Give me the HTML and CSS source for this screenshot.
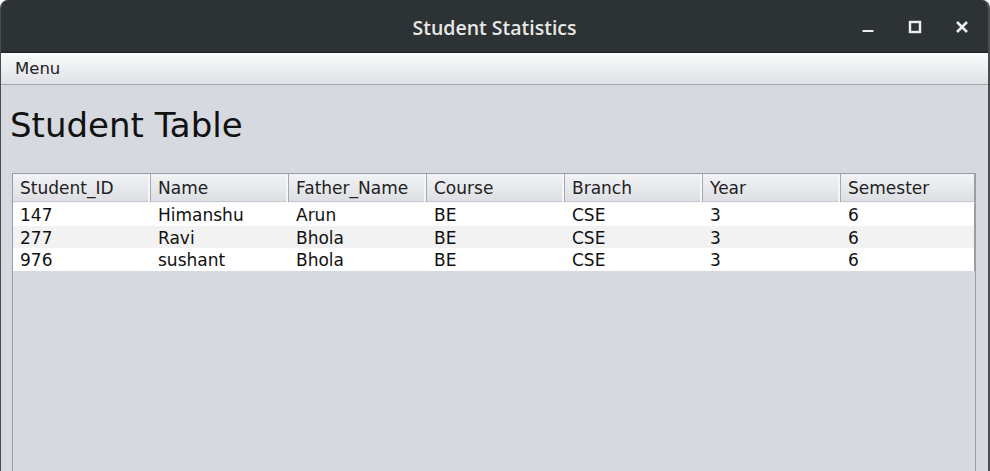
FILE: index.html
```html
<!DOCTYPE html>
<html>
<head>
<meta charset="utf-8">
<link rel="stylesheet" href="styles.css">
</head>
<body>
<div class="window">
  <div class="titlebar">
    <div class="title">Student Statistics</div>
    <div class="controls">
      <svg class="ctl" width="16" height="16" viewBox="0 0 16 16"><rect x="2.5" y="11" width="11" height="2" fill="#eeeeec"/></svg>
      <svg class="ctl" width="16" height="16" viewBox="0 0 16 16"><rect x="3" y="3" width="10" height="10" fill="none" stroke="#eeeeec" stroke-width="2.4"/></svg>
      <svg class="ctl" width="16" height="16" viewBox="0 0 16 16"><path d="M3 3 L13 13 M13 3 L3 13" stroke="#eeeeec" stroke-width="2.6" fill="none"/></svg>
    </div>
  </div>
  <div class="menubar"><span class="menu">Menu</span></div>
  <div class="content">
    <h1 class="heading">Student Table</h1>
    <div class="scrollpane">
      <div class="thead">
        <div class="th">Student_ID</div>
        <div class="th">Name</div>
        <div class="th">Father_Name</div>
        <div class="th">Course</div>
        <div class="th">Branch</div>
        <div class="th">Year</div>
        <div class="th">Semester</div>
      </div>
      <div class="tr">
        <div class="td">147</div><div class="td">Himanshu</div><div class="td">Arun</div><div class="td">BE</div><div class="td">CSE</div><div class="td">3</div><div class="td">6</div>
      </div>
      <div class="tr alt">
        <div class="td">277</div><div class="td">Ravi</div><div class="td">Bhola</div><div class="td">BE</div><div class="td">CSE</div><div class="td">3</div><div class="td">6</div>
      </div>
      <div class="tr">
        <div class="td">976</div><div class="td">sushant</div><div class="td">Bhola</div><div class="td">BE</div><div class="td">CSE</div><div class="td">3</div><div class="td">6</div>
      </div>
    </div>
  </div>
</div>
</body>
</html>
```
FILE: styles.css
```css
html, body {
  margin: 0;
  padding: 0;
  width: 990px;
  height: 471px;
  overflow: hidden;
  background: #ffffff;
}
.window {
  width: 990px;
  height: 471px;
  display: flex;
  flex-direction: column;
  background: #d6d9df;
  border-radius: 8px 8px 0 0;
  overflow: hidden;
  font-family: "DejaVu Sans", sans-serif;
  box-sizing: border-box;
  border-left: 1px solid #4a4d50;
  border-right: 2px solid #4a4d50;
}
.titlebar {
  height: 52px;
  flex: none;
  background: #2d3234;
  border-bottom: 1px solid #1e2122;
  position: relative;
  display: flex;
  align-items: center;
  justify-content: center;
}
.title {
  color: #e7e8e6;
  font-family: "Open Sans", "DejaVu Sans", sans-serif;
  font-weight: 600;
  font-size: 19.5px;
  letter-spacing: 0px;
  margin-top: 2px;
}
.controls {
  position: absolute;
  right: 18px;
  top: 19px;
  display: flex;
  gap: 31px;
}
.ctl { display: block; }
.menubar {
  height: 31px;
  flex: none;
  background: linear-gradient(#fafbfb, #dfe1e5);
  border-bottom: 1px solid #a4a7ad;
  display: flex;
  align-items: center;
}
.menu {
  font-size: 16.5px;
  color: #222;
  margin-left: 14px;
  margin-top: 0px;
}
.content {
  flex: 1;
  padding: 0 11px 0 11px;
  display: flex;
  flex-direction: column;
}
.heading {
  margin: 20px 0 0 -2px;
  font-weight: normal;
  font-size: 34px;
  line-height: 40px;
  color: #111;
  height: 68px;
}
.scrollpane {
  flex: 1;
  border: 1px solid #9a9da3;
  border-bottom: none;
  background: #d6d9df;
  width: 962px;
}
.thead {
  display: grid;
  grid-template-columns: repeat(6, 138px) 1fr;
  height: 28px;
  background: linear-gradient(#f2f3f5, #dcdee3);
  border-bottom: 1px solid #f6f8fb;
  box-shadow: inset 0 -1px 0 #c6c9ce;
  border-right: 1px solid #9a9da3;
}
.th {
  font-size: 17px;
  color: #222;
  padding-left: 7px;
  line-height: 28px;
  border-right: 1px solid #a6a9ae;
  box-shadow: inset -2px 0 0 #f5f6f8;
}
.th:last-child { border-right: none; box-shadow: none; }
.tr {
  display: grid;
  grid-template-columns: repeat(6, 138px) 1fr;
  height: 22.5px;
  background: #ffffff;
  border-right: 1px solid #9a9da3;
}
.tr.alt { background: #f2f2f2; }
.td {
  font-size: 17px;
  color: #111;
  padding-left: 7px;
  line-height: 24px;
}
```
